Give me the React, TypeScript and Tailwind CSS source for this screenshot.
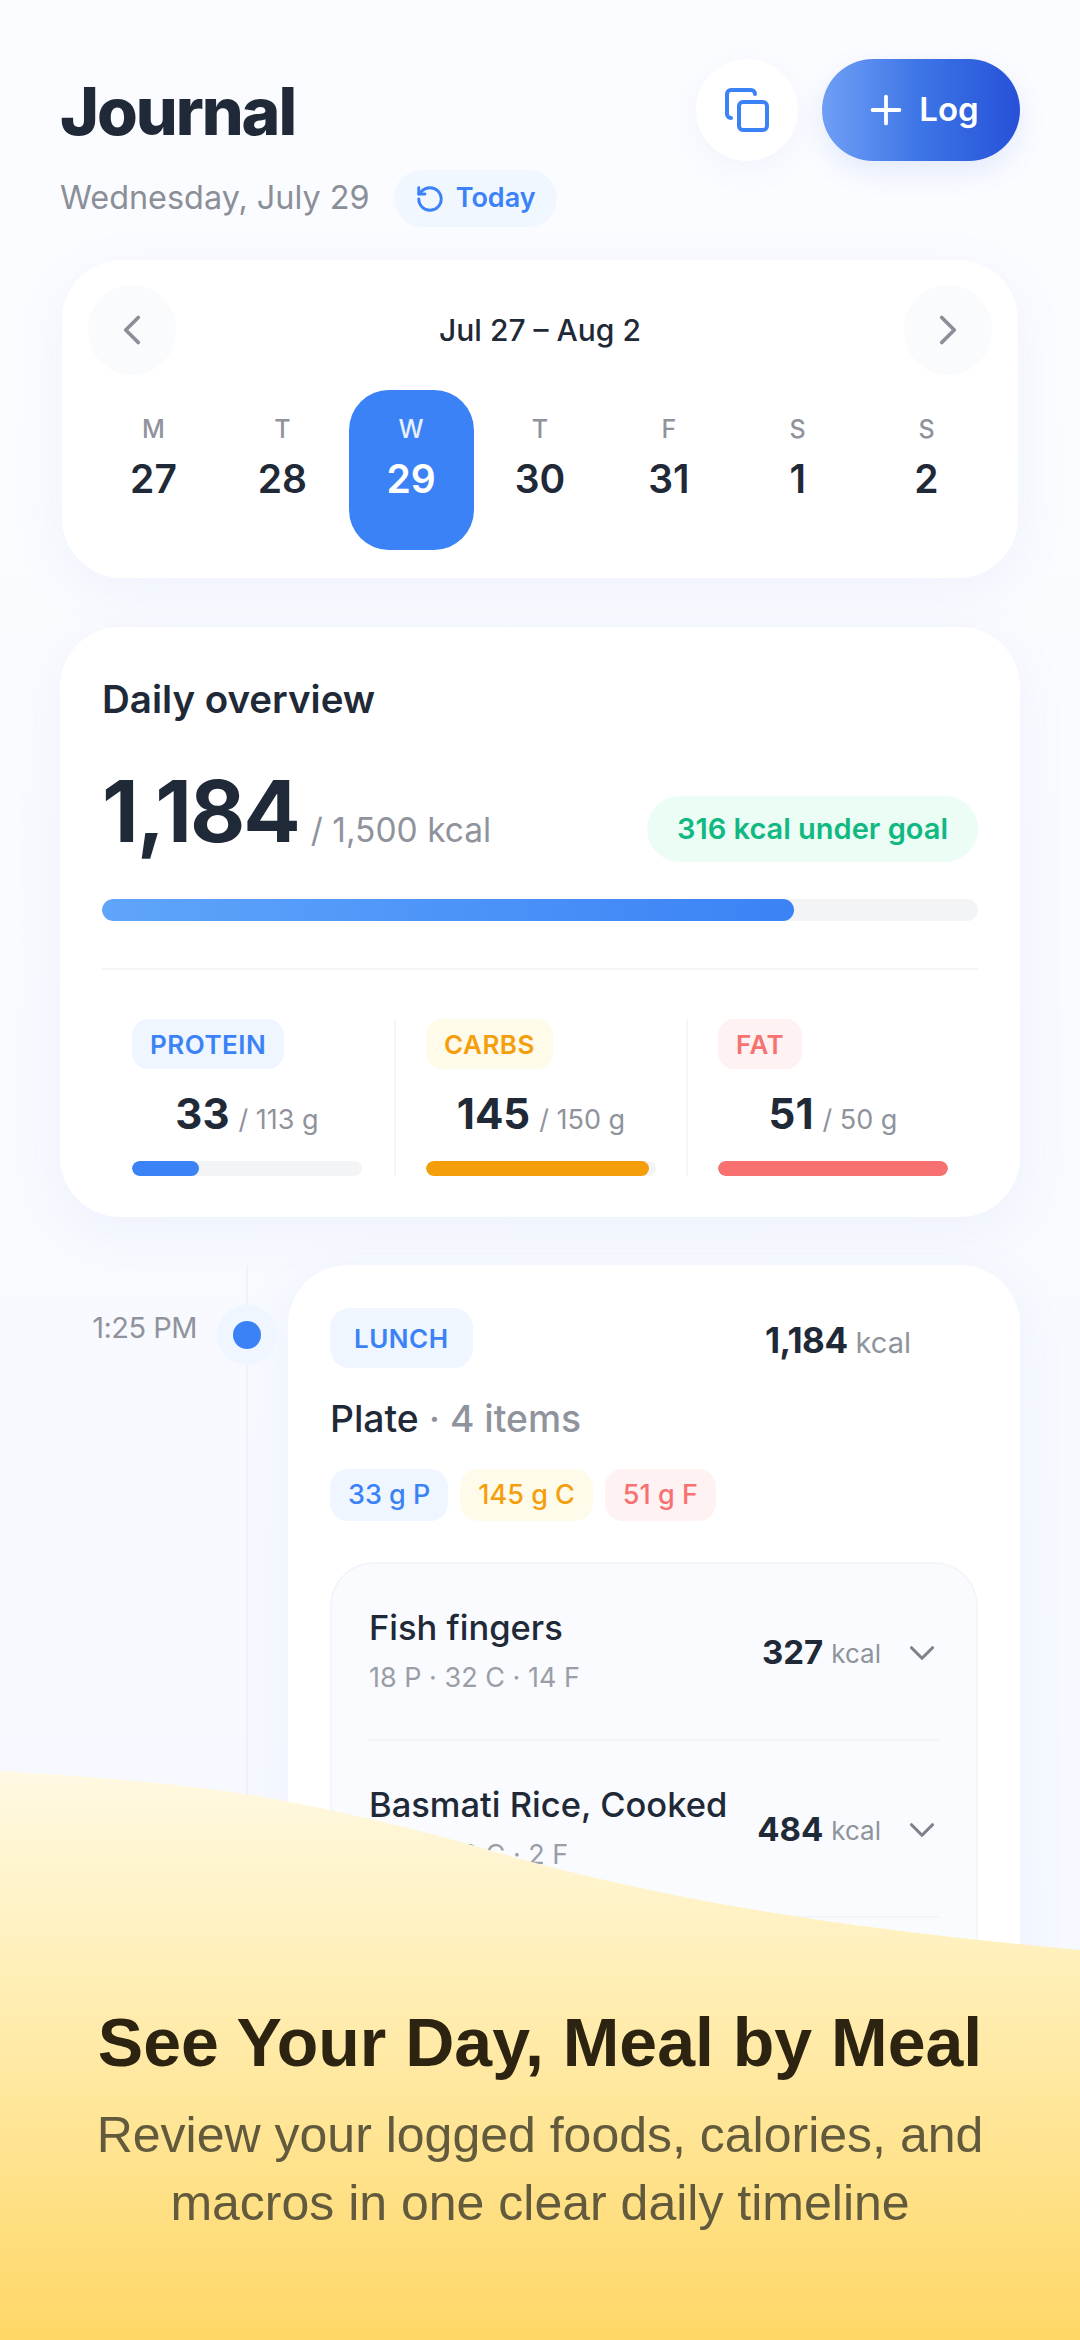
import { ChevronDown, ChevronLeft, ChevronRight, Copy, Plus, RotateCcw } from "lucide-react";
import clsx from "clsx";

const DAYS = [
  { label: "M", date: "27" },
  { label: "T", date: "28" },
  { label: "W", date: "29", active: true },
  { label: "T", date: "30" },
  { label: "F", date: "31" },
  { label: "S", date: "1" },
  { label: "S", date: "2" },
];

const MACROS = [
  { name: "PROTEIN", value: "33", goal: "/ 113 g", chip: "bg-[#eff6ff] text-[#3b82f6]", bar: "bg-[#3b82f6] w-[29%]" },
  { name: "CARBS", value: "145", goal: "/ 150 g", chip: "bg-[#fffbeb] text-[#f59e0b]", bar: "bg-[#f59e0b] w-[97%]" },
  { name: "FAT", value: "51", goal: "/ 50 g", chip: "bg-[#fef2f2] text-[#f87171]", bar: "bg-[#f87171] w-full" },
];

const FOODS = [
  { name: "Fish fingers", macros: "18 P · 32 C · 14 F", kcal: "327" },
  { name: "Basmati Rice, Cooked", macros: "9 P · 102 C · 2 F", kcal: "484" },
];

function MacroColumn({ macro, first }: { macro: (typeof MACROS)[number]; first: boolean }) {
  return (
    <div className={clsx("flex w-[294px] flex-col", first ? "w-[290px] pl-[30px]" : "border-l-2 border-[#f5f6f8] pl-[30px]")}>
      <div className={clsx("flex h-[50px] w-fit items-center rounded-[16px] px-[18px] text-[26px] font-semibold tracking-[0.5px]", macro.chip)}>
        {macro.name}
      </div>
      <div className="mt-[13px] flex h-[50px] w-[230px] items-baseline justify-center gap-[9px]">
        <span className="text-[42px] font-bold text-[#1f2937]">{macro.value}</span>
        <span className="text-[27px] text-[#8f939c]">{macro.goal}</span>
      </div>
      <div className="mt-[29px] h-[15px] w-[230px] overflow-hidden rounded-full bg-[#f3f4f6]">
        <div className={clsx("h-full rounded-full", macro.bar)} />
      </div>
    </div>
  );
}

function FoodRow({ food }: { food: (typeof FOODS)[number] }) {
  return (
    <div className="flex h-[177px] items-center justify-between border-b-2 border-[#f3f5f9] pb-[3px]">
      <div className="mt-[2px]">
        <div className="text-[34.5px] leading-[44px] font-medium text-[#1f2937]">{food.name}</div>
        <div className="mt-[10px] text-[27px] leading-[36px] text-[#9a9ea6]">{food.macros}</div>
      </div>
      <div className="mt-[6px] flex items-center">
        <span className="text-[33px] font-bold text-[#1f2937]">{food.kcal}</span>
        <span className="ml-[8px] text-[26px] text-[#8f939c]">kcal</span>
        <ChevronDown className="mr-[-4px] ml-[20px] h-[42px] w-[42px] text-[#7d828c]" strokeWidth={1.8} />
      </div>
    </div>
  );
}

export default function App() {
  return (
    <div className="relative h-[2340px] w-[1080px] overflow-hidden bg-gradient-to-b from-[#fbfcff] to-[#f5f8ff] px-[60px] pt-[59px] font-['Inter',sans-serif]">
      <header className="flex h-[102px] items-center justify-between">
        <h1 className="mt-[2px] text-[66px] font-extrabold tracking-[-2px] text-[#1f2937]">Journal</h1>
        <div className="flex items-center gap-[24px]">
          <button type="button" className="flex h-[102px] w-[102px] items-center justify-center rounded-full bg-white shadow-[0_8px_30px_rgba(120,150,220,0.08)]">
            <Copy className="h-[48px] w-[48px] text-[#3b82f6]" strokeWidth={2} />
          </button>
          <button type="button" className="flex h-[102px] w-[198px] items-center justify-center gap-[10px] rounded-full bg-gradient-to-r from-[#6f9ff5] via-[#3d74e6] to-[#2751d8] text-[33px] font-semibold text-white shadow-[0_10px_28px_rgba(59,110,230,0.12)]">
            <Plus className="h-[46px] w-[46px]" strokeWidth={2} />
            Log
          </button>
        </div>
      </header>

      <div className="mt-[9px] flex h-[57px] items-center gap-[24px]">
        <span className="text-[32.4px] text-[#8b8f98]">Wednesday, July 29</span>
        <span className="flex h-[57px] items-center gap-[11px] rounded-full bg-[#f1f7ff] px-[21px] text-[27px] font-semibold text-[#3b82f6]">
          <RotateCcw className="h-[30px] w-[30px]" strokeWidth={2.3} />
          Today
        </span>
      </div>

      <section className="mx-[2px] mt-[33px] h-[318px] rounded-[60px] bg-white px-[26px] pt-[25px] shadow-[0_12px_50px_rgba(110,140,220,0.08)]">
        <div className="flex items-center justify-between">
          <div className="flex h-[90px] w-[88px] items-center justify-center rounded-full bg-[#fafbfd]">
            <ChevronLeft className="h-[50px] w-[50px] text-[#8b8f98]" strokeWidth={1.8} />
          </div>
          <span className="text-[30px] font-medium text-[#1f2937]">Jul 27 – Aug 2</span>
          <div className="flex h-[90px] w-[88px] items-center justify-center rounded-full bg-[#fafbfd]">
            <ChevronRight className="h-[50px] w-[50px] text-[#8b8f98]" strokeWidth={1.8} />
          </div>
        </div>
        <div className="mt-[15px] flex justify-between px-[3px]">
          {DAYS.map((day, i) => (
            <div
              key={i}
              className={clsx(
                "flex h-[160px] w-[125px] flex-col items-center rounded-[40px] pt-[22px]",
                day.active && "bg-[#3b82f6]"
              )}
            >
              <span className={clsx("text-[25px] leading-[34px] font-medium", day.active ? "text-[#e8f0ff]" : "text-[#8f939c]")}>
                {day.label}
              </span>
              <span className={clsx("mt-[8px] text-[39px] leading-[50px] font-semibold", day.active ? "text-white" : "text-[#1f2937]")}>
                {day.date}
              </span>
            </div>
          ))}
        </div>
      </section>

      <section className="mt-[49px] h-[590px] rounded-[60px] bg-white px-[42px] pt-[46px] shadow-[0_12px_50px_rgba(110,140,220,0.08)]">
        <h2 className="text-[38.5px] leading-[52px] font-semibold text-[#1f2937]">Daily overview</h2>
        <div className="mt-[32px] flex h-[110px] items-center justify-between">
          <div className="flex items-baseline gap-[12px]">
            <span className="text-[85px] leading-[110px] font-bold tracking-[-2px] text-[#1f2937]">1,184</span>
            <span className="text-[33.5px] text-[#8f939c]">/ 1,500 kcal</span>
          </div>
          <span className="mt-[34px] flex h-[66px] items-center rounded-full bg-[#ecfdf5] px-[30px] text-[29px] font-semibold text-[#10b981]">
            316 kcal under goal
          </span>
        </div>
        <div className="mt-[32px] h-[22px] overflow-hidden rounded-full bg-[#f3f4f6]">
          <div className="h-full w-[79%] rounded-full bg-gradient-to-r from-[#60a5fa] to-[#3b82f6]" />
        </div>
        <div className="mt-[47px] border-t-2 border-[#f4f5f7]" />
        <div className="mt-[49px] flex">
          {MACROS.map((macro, i) => (
            <MacroColumn key={macro.name} macro={macro} first={i === 0} />
          ))}
        </div>
      </section>

      <div className="mt-[48px] flex">
        <div className="relative h-[1000px] w-[228px] shrink-0">
          <div className="absolute top-0 bottom-0 left-[186px] w-[2px] bg-[#eff2f8]" />
          <span className="absolute top-[41px] right-[91px] text-[29px] tracking-[-0.5px] text-[#8f939c]">1:25 PM</span>
          <div className="absolute top-[40px] left-[157px] flex h-[60px] w-[60px] items-center justify-center rounded-full bg-[#f0f6ff]">
            <div className="h-[28px] w-[28px] rounded-full bg-[#3b82f6]" />
          </div>
        </div>
        <section className="h-[1000px] flex-1 rounded-[60px] bg-white px-[42px] pt-[43px] shadow-[0_12px_50px_rgba(110,140,220,0.08)]">
          <div className="flex items-start justify-between">
            <span className="flex h-[60px] items-center rounded-[20px] bg-[#eff6ff] px-[24px] text-[26px] font-semibold tracking-[0.5px] text-[#3b82f6]">
              LUNCH
            </span>
            <div className="mt-[6px] mr-[67px] flex items-baseline gap-[8px]">
              <span className="text-[35px] font-bold tracking-[-0.5px] text-[#1f2937]">1,184</span>
              <span className="text-[29px] text-[#8f939c]">kcal</span>
            </div>
          </div>
          <div className="mt-[26px] text-[37.3px] leading-[50px] font-medium text-[#1f2937]">
            Plate <span className="text-[#8f939c]">· 4 items</span>
          </div>
          <div className="mt-[25px] flex gap-[12px]">
            <span className="flex h-[52px] items-center rounded-[18px] bg-[#eff6ff] px-[18px] text-[27px] font-medium text-[#3b82f6]">33 g P</span>
            <span className="flex h-[52px] items-center rounded-[18px] bg-[#fffbeb] px-[18px] text-[27px] font-medium text-[#f59e0b]">145 g C</span>
            <span className="flex h-[52px] items-center rounded-[18px] bg-[#fef2f2] px-[18px] text-[27px] font-medium text-[#f87171]">51 g F</span>
          </div>
          <div className="mt-[41px] rounded-[44px] border-2 border-[#f3f5f9] bg-[#f9fbfe] px-[37px]">
            {FOODS.map((food) => (
              <FoodRow key={food.name} food={food} />
            ))}
            <div className="h-[160px]" />
          </div>
        </section>
      </div>

      <div className="absolute inset-x-0 bottom-0 h-[572px]">
        <svg className="absolute inset-0 h-full w-full" viewBox="0 0 1080 572" preserveAspectRatio="none">
          <defs>
            <linearGradient id="wave" x1="0" y1="0" x2="0" y2="1">
              <stop offset="0" stopColor="#fff9e3" />
              <stop offset="0.35" stopColor="#ffefb8" />
              <stop offset="1" stopColor="#ffd766" />
            </linearGradient>
          </defs>
          <path d="M0 3 C 110 10 200 17 275 31 C 350 45 420 62 482 80 C 560 103 620 116 689 130 C 820 155 950 170 1080 182 L1080 572 L0 572 Z" fill="url(#wave)" />
        </svg>
        <div className="relative flex flex-col items-center pt-[232px] font-['Liberation_Sans',Arial,sans-serif]">
          <h2 className="text-[68px] leading-[84px] font-bold text-[#2c2411]">See Your Day, Meal by Meal</h2>
          <p className="mt-[17px] text-center text-[50px] leading-[68px] text-[#625a3d]">
            Review your logged foods, calories, and
            <br />
            macros in one clear daily timeline
          </p>
        </div>
      </div>
    </div>
  );
}
